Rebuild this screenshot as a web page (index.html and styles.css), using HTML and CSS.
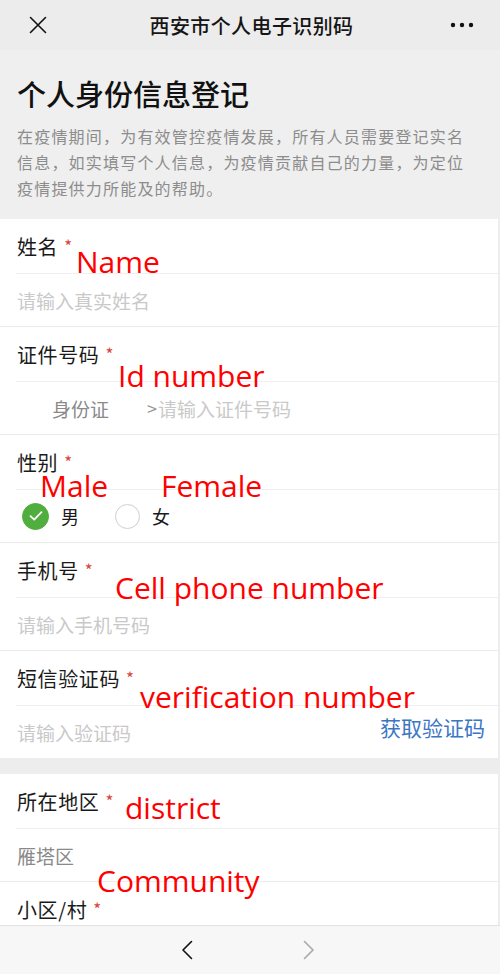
FILE: index.html
```html
<!DOCTYPE html>
<html lang="zh-CN">
<head>
<meta charset="utf-8">
<title>西安市个人电子识别码</title>
<link rel="stylesheet" href="styles.css">
</head>
<body>
<div class="app">
  <header class="topbar">
    <span class="topbar-btn">
      <svg width="18" height="18" viewBox="0 0 18 18"><path d="M1.5 1.5 L16.5 16.5 M16.5 1.5 L1.5 16.5" stroke="#111" stroke-width="1.6" fill="none" stroke-linecap="round"/></svg>
    </span>
    <h1 class="topbar-title">西安市个人电子识别码</h1>
    <span class="topbar-btn topbar-more">
      <svg width="24" height="6" viewBox="0 0 24 6"><circle cx="3" cy="3" r="2.2" fill="#111"/><circle cx="12" cy="3" r="2.2" fill="#111"/><circle cx="21" cy="3" r="2.2" fill="#111"/></svg>
    </span>
  </header>

  <main class="content">
    <section class="intro">
      <h2 class="intro-title">个人身份信息登记</h2>
      <p class="intro-desc">在疫情期间，为有效管控疫情发展，所有人员需要登记实名信息，如实填写个人信息，为疫情贡献自己的力量，为定位疫情提供力所能及的帮助。</p>
    </section>

    <section class="form-group">
      <div class="field">
        <div class="field-label">姓名<span class="req">*</span></div>
        <div class="field-input"><span class="placeholder">请输入真实姓名</span></div>
        <span class="note note-name">Name</span>
      </div>
      <div class="field">
        <div class="field-label">证件号码<span class="req">*</span></div>
        <div class="field-input id-row">
          <span class="id-type">身份证</span>
          <span class="id-arrow">&gt;</span><span class="placeholder">请输入证件号码</span>
        </div>
        <span class="note note-id">Id number</span>
      </div>
      <div class="field">
        <div class="field-label">性别<span class="req">*</span></div>
        <div class="field-input radio-row">
          <span class="radio">
            <span class="radio-dot checked">
              <svg width="14" height="12" viewBox="0 0 14 12"><path d="M1.5 6.2 L5.2 9.6 L12.5 2.2" stroke="#fff" stroke-width="1.8" fill="none" stroke-linecap="round" stroke-linejoin="round"/></svg>
            </span>
            <span class="radio-text">男</span>
          </span>
          <span class="radio">
            <span class="radio-dot"></span>
            <span class="radio-text">女</span>
          </span>
        </div>
        <span class="note note-male">Male</span>
        <span class="note note-female">Female</span>
      </div>
      <div class="field">
        <div class="field-label">手机号<span class="req">*</span></div>
        <div class="field-input"><span class="placeholder">请输入手机号码</span></div>
        <span class="note note-phone">Cell phone number</span>
      </div>
      <div class="field field-last">
        <div class="field-label">短信验证码<span class="req">*</span></div>
        <div class="field-input code-row">
          <span class="placeholder">请输入验证码</span>
          <span class="code-btn">获取验证码</span>
        </div>
        <span class="note note-code">verification number</span>
      </div>
    </section>

    <section class="form-group form-group-2">
      <div class="field">
        <div class="field-label">所在地区<span class="req">*</span></div>
        <div class="field-input"><span class="value">雁塔区</span></div>
        <span class="note note-district">district</span>
      </div>
      <div class="field field-last">
        <div class="field-label">小区/村<span class="req">*</span></div>
        <div class="field-input"></div>
        <span class="note note-community">Community</span>
      </div>
    </section>
  </main>

  <nav class="bottombar">
    <span class="nav-btn">
      <svg width="12" height="20" viewBox="0 0 12 20"><path d="M10.5 1.5 L2 10 L10.5 18.5" stroke="#111" stroke-width="1.6" fill="none" stroke-linecap="round" stroke-linejoin="round"/></svg>
    </span>
    <span class="nav-btn">
      <svg width="12" height="20" viewBox="0 0 12 20"><path d="M1.5 1.5 L10 10 L1.5 18.5" stroke="#a8a8a8" stroke-width="1.6" fill="none" stroke-linecap="round" stroke-linejoin="round"/></svg>
    </span>
  </nav>
</div>
</body>
</html>
```

FILE: styles.css
```css
* { box-sizing: border-box; }

html, body {
  margin: 0;
  padding: 0;
}

body {
  font-family: "Noto Sans CJK SC", "Noto Sans", sans-serif;
  background: #ededed;
  color: #1a1a1a;
}

.app {
  width: 500px;
  height: 974px;
  display: flex;
  flex-direction: column;
  overflow: hidden;
}

/* top bar */
.topbar {
  height: 50px;
  flex: 0 0 50px;
  background: #ececec;
  display: flex;
  align-items: center;
  justify-content: space-between;
  padding: 0 26px 0 29px;
}

.topbar-btn {
  display: flex;
  align-items: center;
  width: 24px;
  height: 24px;
}

.topbar-more {
  justify-content: flex-end;
}

.topbar-title {
  margin: 0;
  font-size: 20px;
  font-weight: 500;
  letter-spacing: 0.4px;
  color: #151515;
  line-height: 1;
  padding-top: 2px;
}

/* content */
.content {
  flex: 1 1 auto;
  overflow: hidden;
  background: #ededed;
}

.intro {
  background: #efefef;
  padding: 23px 30px 18px 17px;
}

.intro-title {
  margin: 0;
  font-size: 29px;
  line-height: 40px;
  font-weight: 500;
  color: #111;
}

.intro-desc {
  margin: 10px 0 0;
  font-size: 16px;
  line-height: 26px;
  letter-spacing: 1.2px;
  color: #8c8c8c;
}

.form-group {
  background: #fff;
  margin-right: 2px;
}

.form-group-2 {
  margin-top: 16px;
}

.field {
  position: relative;
  border-bottom: 1px solid #ececec;
}

.field-last {
  border-bottom: none;
}

.field-label {
  height: 55px;
  margin-left: 16px;
  padding-left: 1px;
  display: flex;
  align-items: center;
  border-bottom: 1px solid #efefef;
  font-size: 20px;
  letter-spacing: 0.6px;
  color: #1a1a1a;
}

.req {
  color: #d9463b;
  font-size: 17px;
  margin-left: 6px;
  align-self: flex-start;
  margin-top: 14px;
}

.field-input {
  height: 52px;
  display: flex;
  align-items: center;
  padding: 0 17px;
  font-size: 19px;
}

.placeholder {
  color: #c9c9c9;
}

.value {
  color: #8a8a8a;
}

.id-row {
  padding-left: 52px;
}

.id-type {
  color: #8a8a8a;
  width: 95px;
}

.id-arrow {
  color: #999;
  font-size: 18px;
  margin-right: 1px;
}

.radio-row {
  padding-left: 22px;
}

.radio {
  display: flex;
  align-items: center;
  margin-right: 36px;
}

.radio-dot {
  width: 27px;
  height: 27px;
  border-radius: 50%;
  border: 1.5px solid #cfcfcf;
  display: flex;
  align-items: center;
  justify-content: center;
  background: #fff;
}

.radio-dot.checked {
  background: #4fae3e;
  border-color: #4fae3e;
}

.radio + .radio .radio-dot {
  width: 25px;
  height: 25px;
}

.radio-text {
  margin-left: 12px;
  font-size: 18px;
  color: #1a1a1a;
}

.code-row {
  justify-content: space-between;
  padding-right: 13px;
}

.code-btn {
  color: #3b76c4;
  font-size: 21px;
  margin-bottom: 10px;
}

/* red overlay annotations */
.note {
  position: absolute;
  font-family: "Open Sans", "DejaVu Sans", sans-serif;
  font-size: 30px;
  line-height: 30px;
  color: #ff0000;
  white-space: nowrap;
  z-index: 2;
}

.note-name { left: 76px; top: 28px; }
.note-id { left: 118px; top: 34px; }
.note-male { left: 40px; top: 36px; }
.note-female { left: 161px; top: 36px; }
.note-phone { left: 115px; top: 30px; }
.note-code { left: 140px; top: 31px; }
.note-district { left: 125px; top: 19px; }
.note-community { left: 97px; top: -16px; }

/* bottom bar */
.bottombar {
  height: 49px;
  flex: 0 0 49px;
  background: #f7f7f7;
  border-top: 1px solid #e3e3e3;
  display: flex;
  align-items: center;
  justify-content: center;
  gap: 110px;
  padding-right: 4px;
}

.nav-btn {
  display: flex;
  align-items: center;
}
```
